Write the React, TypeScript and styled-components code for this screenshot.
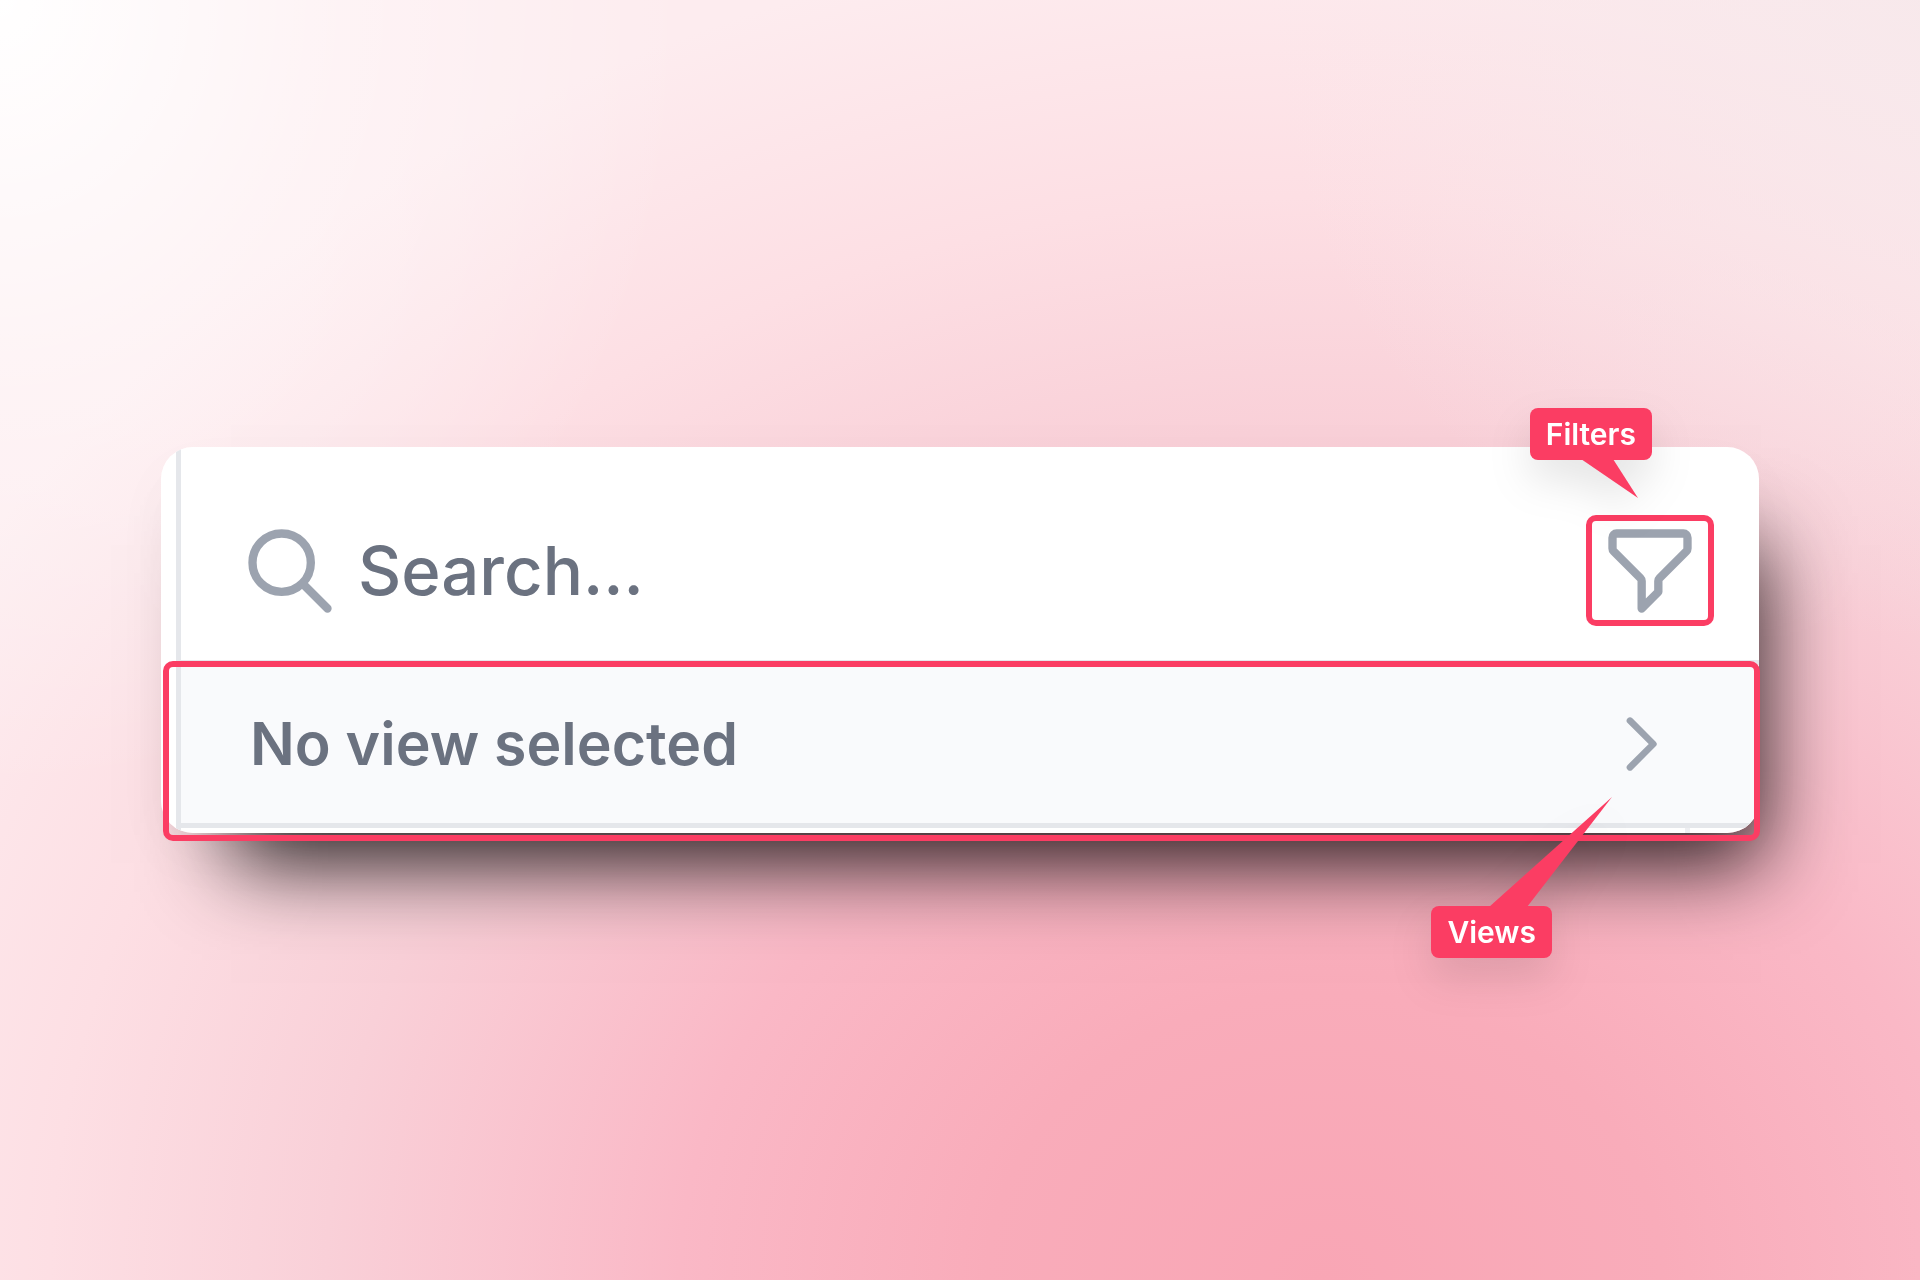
import React from 'react';
import styled, { createGlobalStyle } from 'styled-components';

const accent = '#fb3d63';

const GlobalStyle = createGlobalStyle`
  *, *::before, *::after { box-sizing: border-box; }
  body { margin: 0; font-family: Inter, "Liberation Sans", sans-serif; }
`;

const Page = styled.main`
  min-height: 100vh;
  display: flex;
  align-items: center;
  justify-content: center;
  padding: 80px 161px;
  background:
    radial-gradient(ellipse 36% 62% at 0% 0%, #ffffff 0%, rgba(255, 255, 255, 0.4) 48%, rgba(255, 255, 255, 0) 100%),
    radial-gradient(ellipse 34% 50% at 100% 0%, rgba(247, 232, 235, 0.9) 0%, rgba(247, 232, 235, 0) 100%),
    radial-gradient(ellipse 80% 102% at 69% 100%, #f9a6b5 0%, #f9acba 22%, #fab8c6 42%, #f9d0d8 65%, #fddfe4 83%, #fdecef 104%);
`;

const Frame = styled.div`
  position: relative;
  width: 100%;
`;

const Card = styled.section`
  overflow: hidden;
  padding-left: 15px;
  border-radius: 32px;
  background: #ffffff;
`;

const Shadow = styled.div`
  border-radius: 32px;
  box-shadow:
    0 24px 60px rgba(0, 0, 0, 0.03),
    36px 64px 80px -34px rgba(0, 0, 0, 0.85);
`;

const Panel = styled.div`
  border-left: 5px solid #e5e7eb;
`;

const SearchRow = styled.form`
  display: flex;
  align-items: center;
  gap: 18px;
  height: 213px;
  padding: 35px 59px 0;
`;

const SearchLabel = styled.label`
  display: flex;
`;

const SearchInput = styled.input`
  flex: 1;
  min-width: 0;
  padding: 0;
  border: 0;
  outline: 0;
  background: transparent;
  color: #6b7280;
  font: 450 67px/100px Inter, "Liberation Sans", sans-serif;
  &::placeholder { color: #6b7280; opacity: 1; }
`;

const IconButton = styled.button`
  display: flex;
  padding: 0;
  border: 0;
  background: transparent;
  cursor: pointer;
`;

const ViewRow = styled.button`
  display: flex;
  align-items: center;
  justify-content: space-between;
  width: 100%;
  height: 168px;
  padding: 0 79px 0 69px;
  border: solid #e5e7eb;
  border-width: 5px 0;
  background: #f9fafc;
  color: #6b7280;
  font: 600 59px/80px Inter, "Liberation Sans", sans-serif;
  text-align: left;
  cursor: pointer;
`;

const NextSection = styled.div`
  height: 5px;
  margin-right: 69px;
  border-right: 5px solid #eeeff2;
`;

const Icon = styled.svg<{ $size: number }>`
  display: block;
  width: ${(p) => p.$size}px;
  height: ${(p) => p.$size}px;
  fill: none;
  stroke: #9ca3af;
  stroke-width: 2;
  stroke-linecap: round;
  stroke-linejoin: round;
`;

const Outline = styled.div`
  position: absolute;
  border: 6px solid ${accent};
  border-radius: 10px;
  pointer-events: none;
`;

const FilterOutline = styled(Outline)`
  top: 68px;
  right: 45px;
  width: 128px;
  height: 111px;
`;

const ViewsOutline = styled(Outline)`
  top: 214px;
  right: -1px;
  bottom: -8px;
  left: 2px;
`;

const Callout = styled.div`
  position: absolute;
  height: 52px;
  padding: 0 16px;
  border-radius: 8px;
  background: ${accent};
  color: #ffffff;
  font-size: 30px;
  font-weight: 600;
  line-height: 52px;
  filter: drop-shadow(0 20px 20px rgba(0, 0, 0, 0.1));
`;

const FiltersCallout = styled(Callout)`
  top: -39px;
  right: 107px;
`;

const ViewsCallout = styled(Callout)`
  bottom: -125px;
  right: 207px;
`;

const Tail = styled.svg`
  position: absolute;
  display: block;
  fill: ${accent};
`;

const FiltersTail = styled(Tail)`
  top: 51px;
  right: 14px;
  width: 58px;
  height: 39px;
`;

const ViewsTail = styled(Tail)`
  bottom: 51px;
  right: -61px;
  width: 124px;
  height: 110px;
`;

export default function App() {
  return (
    <>
      <GlobalStyle />
      <Page>
        <Frame>
          <Shadow>
            <Card>
              <Panel>
                <SearchRow onSubmit={(e) => e.preventDefault()}>
                  <SearchLabel htmlFor="search" aria-label="Search">
                    <Icon $size={100} viewBox="0 0 24 24" aria-hidden="true">
                      <path d="M21 21l-6-6m2-5a7 7 0 11-14 0 7 7 0 0114 0z" />
                    </Icon>
                  </SearchLabel>
                  <SearchInput id="search" type="text" placeholder="Search..." />
                  <IconButton type="button" aria-label="Filters">
                    <Icon $size={100} viewBox="0 0 24 24" aria-hidden="true">
                      <path d="M3 4a1 1 0 011-1h16a1 1 0 011 1v2.586a1 1 0 01-.293.707l-6.414 6.414a1 1 0 00-.293.707V17l-4 4v-6.586a1 1 0 00-.293-.707L3.293 7.293A1 1 0 013 6.586V4z" />
                    </Icon>
                  </IconButton>
                </SearchRow>
                <ViewRow type="button">
                  No view selected
                  <Icon $size={80} viewBox="0 0 24 24" aria-hidden="true">
                    <path d="M9 5l7 7-7 7" />
                  </Icon>
                </ViewRow>
                <NextSection />
              </Panel>
            </Card>
          </Shadow>
          <FilterOutline />
          <ViewsOutline />
          <FiltersCallout>
            Filters
            <FiltersTail viewBox="0 0 58 39" aria-hidden="true">
              <path d="M1 0h32l25 39z" />
            </FiltersTail>
          </FiltersCallout>
          <ViewsCallout>
            Views
            <ViewsTail viewBox="0 0 124 110" aria-hidden="true">
              <path d="M0 110h38L123 0z" />
            </ViewsTail>
          </ViewsCallout>
        </Frame>
      </Page>
    </>
  );
}
